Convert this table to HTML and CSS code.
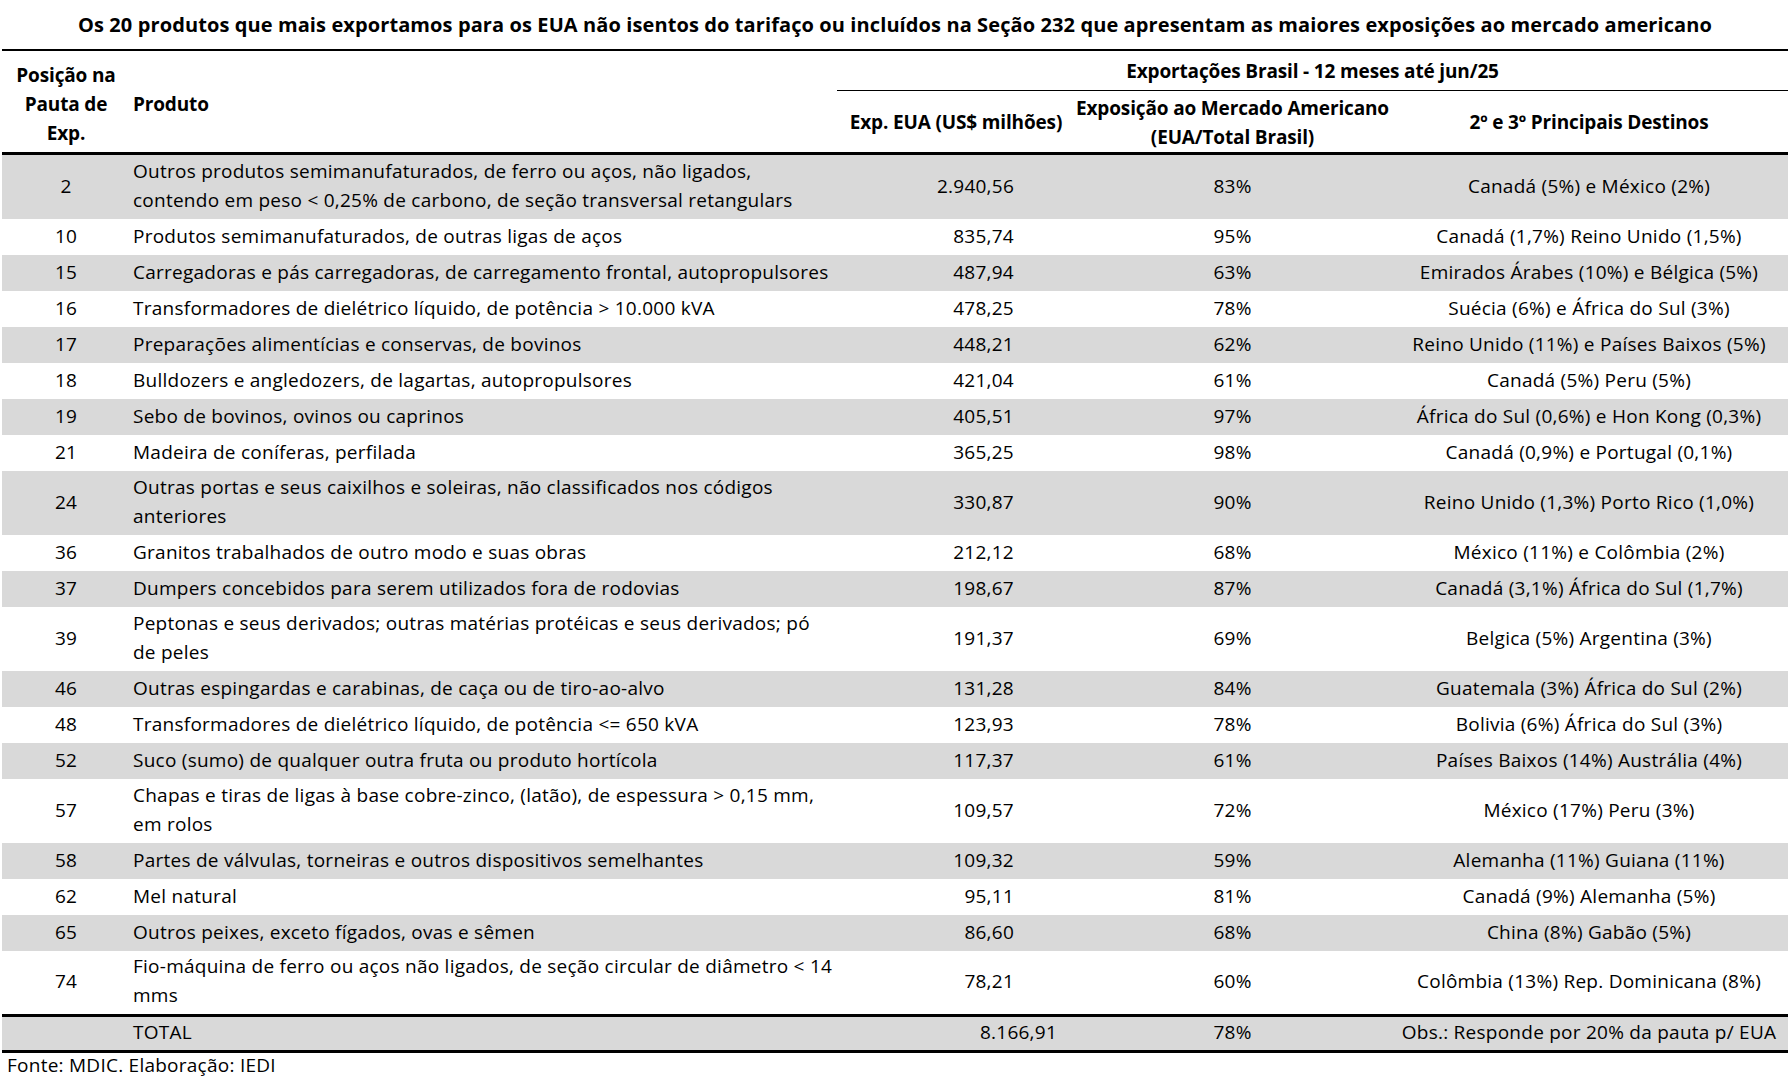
FILE: index.html
```html
<!DOCTYPE html>
<html lang="pt-BR">
<head>
<meta charset="utf-8">
<title>Exportações para os EUA</title>
<link rel="stylesheet" href="styles.css">
</head>
<body>
<div class="page">
  <h1 class="title">Os 20 produtos que mais exportamos para os EUA não isentos do tarifaço ou incluídos na Seção 232 que apresentam as maiores exposições ao mercado americano</h1>
  <table class="tbl">
    <colgroup>
      <col class="c-pos"><col class="c-prod"><col class="c-exp"><col class="c-pct"><col class="c-dest">
    </colgroup>
    <thead>
      <tr class="h1">
        <th rowspan="2" class="pos head-pos">Posição na<br>Pauta de<br>Exp.</th>
        <th rowspan="2" class="prod">Produto</th>
        <th colspan="3" class="group">Exportações Brasil - 12 meses até jun/25</th>
      </tr>
      <tr class="h2">
        <th class="exp-h">Exp. EUA (US$ milhões)</th>
        <th class="pct two">Exposição ao Mercado Americano<br>(EUA/Total Brasil)</th>
        <th class="dest">2º e 3º Principais Destinos</th>
      </tr>
    </thead>
    <tbody>
      <tr class="g tall"><td class="pos">2</td><td class="prod two">Outros produtos semimanufaturados, de ferro ou aços, não ligados,<br>contendo em peso &lt; 0,25% de carbono, de seção transversal retangulars</td><td class="exp">2.940,56</td><td class="pct">83%</td><td class="dest">Canadá (5%) e México (2%)</td></tr>
      <tr><td class="pos">10</td><td class="prod">Produtos semimanufaturados, de outras ligas de aços</td><td class="exp">835,74</td><td class="pct">95%</td><td class="dest">Canadá (1,7%) Reino Unido (1,5%)</td></tr>
      <tr class="g"><td class="pos">15</td><td class="prod">Carregadoras e pás carregadoras, de carregamento frontal, autopropulsores</td><td class="exp">487,94</td><td class="pct">63%</td><td class="dest">Emirados Árabes (10%) e Bélgica (5%)</td></tr>
      <tr><td class="pos">16</td><td class="prod">Transformadores de dielétrico líquido, de potência &gt; 10.000 kVA</td><td class="exp">478,25</td><td class="pct">78%</td><td class="dest">Suécia (6%) e África do Sul (3%)</td></tr>
      <tr class="g"><td class="pos">17</td><td class="prod">Preparações alimentícias e conservas, de bovinos</td><td class="exp">448,21</td><td class="pct">62%</td><td class="dest">Reino Unido (11%) e Países Baixos (5%)</td></tr>
      <tr><td class="pos">18</td><td class="prod">Bulldozers e angledozers, de lagartas, autopropulsores</td><td class="exp">421,04</td><td class="pct">61%</td><td class="dest">Canadá (5%) Peru (5%)</td></tr>
      <tr class="g"><td class="pos">19</td><td class="prod">Sebo de bovinos, ovinos ou caprinos</td><td class="exp">405,51</td><td class="pct">97%</td><td class="dest">África do Sul (0,6%) e Hon Kong (0,3%)</td></tr>
      <tr><td class="pos">21</td><td class="prod">Madeira de coníferas, perfilada</td><td class="exp">365,25</td><td class="pct">98%</td><td class="dest">Canadá (0,9%) e Portugal (0,1%)</td></tr>
      <tr class="g tall"><td class="pos">24</td><td class="prod two">Outras portas e seus caixilhos e soleiras, não classificados nos códigos<br>anteriores</td><td class="exp">330,87</td><td class="pct">90%</td><td class="dest">Reino Unido (1,3%) Porto Rico (1,0%)</td></tr>
      <tr><td class="pos">36</td><td class="prod">Granitos trabalhados de outro modo e suas obras</td><td class="exp">212,12</td><td class="pct">68%</td><td class="dest">México (11%) e Colômbia (2%)</td></tr>
      <tr class="g"><td class="pos">37</td><td class="prod">Dumpers concebidos para serem utilizados fora de rodovias</td><td class="exp">198,67</td><td class="pct">87%</td><td class="dest">Canadá (3,1%) África do Sul (1,7%)</td></tr>
      <tr class="tall"><td class="pos">39</td><td class="prod two">Peptonas e seus derivados; outras matérias protéicas e seus derivados; pó<br>de peles</td><td class="exp">191,37</td><td class="pct">69%</td><td class="dest">Belgica (5%) Argentina (3%)</td></tr>
      <tr class="g"><td class="pos">46</td><td class="prod">Outras espingardas e carabinas, de caça ou de tiro-ao-alvo</td><td class="exp">131,28</td><td class="pct">84%</td><td class="dest">Guatemala (3%) África do Sul (2%)</td></tr>
      <tr><td class="pos">48</td><td class="prod">Transformadores de dielétrico líquido, de potência &lt;= 650 kVA</td><td class="exp">123,93</td><td class="pct">78%</td><td class="dest">Bolivia (6%) África do Sul (3%)</td></tr>
      <tr class="g"><td class="pos">52</td><td class="prod">Suco (sumo) de qualquer outra fruta ou produto hortícola</td><td class="exp">117,37</td><td class="pct">61%</td><td class="dest">Países Baixos (14%) Austrália (4%)</td></tr>
      <tr class="tall"><td class="pos">57</td><td class="prod two">Chapas e tiras de ligas à base cobre-zinco, (latão), de espessura &gt; 0,15 mm,<br>em rolos</td><td class="exp">109,57</td><td class="pct">72%</td><td class="dest">México (17%) Peru (3%)</td></tr>
      <tr class="g"><td class="pos">58</td><td class="prod">Partes de válvulas, torneiras e outros dispositivos semelhantes</td><td class="exp">109,32</td><td class="pct">59%</td><td class="dest">Alemanha (11%) Guiana (11%)</td></tr>
      <tr><td class="pos">62</td><td class="prod">Mel natural</td><td class="exp">95,11</td><td class="pct">81%</td><td class="dest">Canadá (9%) Alemanha (5%)</td></tr>
      <tr class="g"><td class="pos">65</td><td class="prod">Outros peixes, exceto fígados, ovas e sêmen</td><td class="exp">86,60</td><td class="pct">68%</td><td class="dest">China (8%) Gabão (5%)</td></tr>
      <tr class="tall"><td class="pos">74</td><td class="prod two">Fio-máquina de ferro ou aços não ligados, de seção circular de diâmetro &lt; 14<br>mms</td><td class="exp">78,21</td><td class="pct">60%</td><td class="dest">Colômbia (13%) Rep. Dominicana (8%)</td></tr>
    </tbody>
    <tfoot>
      <tr class="g total"><td class="pos"></td><td class="prod">TOTAL</td><td class="exp exp-total">8.166,91</td><td class="pct">78%</td><td class="dest">Obs.: Responde por 20% da pauta p/ EUA</td></tr>
    </tfoot>
  </table>
  <p class="source">Fonte: MDIC. Elaboração: IEDI</p>
</div>
</body>
</html>
```

FILE: styles.css
```css
* { box-sizing: border-box; }
html, body { margin: 0; padding: 0; background: #fff; }
body {
  font-family: "Open Sans", Lato, sans-serif;
  color: #000;
  font-size: 19px;
  letter-spacing: 0.25px;
}
.page { width: 1788px; padding-left: 2px; }
.title {
  margin: 0;
  height: 49px;
  line-height: 50px;
  font-size: 20px;
  font-weight: 700;
  letter-spacing: 0.1px;
  text-align: center;
  white-space: nowrap;
}
.tbl {
  border-collapse: collapse;
  table-layout: fixed;
  width: 1786px;
  border-top: 2px solid #000;
  border-bottom: 3px solid #000;
}
.c-pos { width: 128px; }
.c-prod { width: 707px; }
.c-exp { width: 238px; }
.c-pct { width: 315px; }
.c-dest { width: 398px; }
th, td { padding: 0 0 2px; white-space: nowrap; vertical-align: middle; }
th { font-weight: 700; font-size: 19px; letter-spacing: -0.15px; padding: 2px 0 0; }
thead .h1 { height: 40px; }
thead .h2 { height: 63px; }
thead tr.h2 th, thead .head-pos, thead th.prod { border-bottom: 3px solid #000; }
.group { border-bottom: 1px solid #000; text-align: center; }
.head-pos { line-height: 29px; text-align: center; padding-top: 6px; }
th.prod { text-align: left; padding-left: 3px; padding-top: 5px; }
.exp-h { text-align: center; }
th.pct { text-align: center; padding-top: 3px; }
th.two { line-height: 29px; }
th.dest { text-align: center; }
tbody tr { height: 36px; }
tbody tr.tall { height: 64px; }
tbody tr:first-child { height: 66px; }
.g { background: #d9d9d9; }
td.pos { text-align: center; }
td.prod { padding-left: 3px; }
td.two { line-height: 29px; padding-bottom: 2px; }
td.exp { text-align: right; padding-right: 61px; }
td.exp-total { padding-right: 18px; }
td.pct { text-align: center; }
td.dest { text-align: center; }
tfoot tr.total { height: 36px; border-top: 3px solid #000; }
.source { margin: 0 0 0 5px; font-size: 19px; line-height: 24px; }
```
